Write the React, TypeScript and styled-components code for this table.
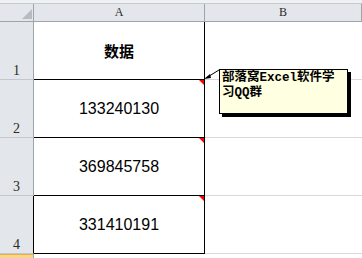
import React from "react";
import styled, { createGlobalStyle, css } from "styled-components";

const GlobalStyle = createGlobalStyle`
  html, body {
    margin: 0;
    padding: 0;
    background: #ffffff;
    overflow: hidden;
  }
`;

const HEAD_BG = "#e3e6ea";
const HEAD_LINE = "#9fa4aa";
const HEAD_SEP = "#c3c7cc";
const GRID = "#d9d9d9";

const Sheet = styled.div`
  position: relative;
  width: 362px;
  height: 258px;
  overflow: hidden;
  background: #fff;
  display: flex;
  flex-direction: column;
`;

const TopStrip = styled.div`
  height: 3px;
  background: #eff1f3;
  border-bottom: 1px solid #c7cbd0;
`;

const Grid = styled.div`
  flex: 1;
  display: grid;
  grid-template-columns: 34px 171px 1fr;
  grid-template-rows: 18px repeat(4, 58px) 1fr;
`;

const Corner = styled.div`
  box-sizing: border-box;
  background: ${HEAD_BG};
  border-right: 1px solid ${HEAD_LINE};
  border-bottom: 1px solid ${HEAD_LINE};
  display: flex;
  align-items: flex-end;
  justify-content: flex-end;
  padding: 0 1px 2px 0;
`;

const CornerMark = styled.div`
  width: 10px;
  height: 10px;
  background: #b7bcc2;
  clip-path: polygon(100% 0, 100% 100%, 0 100%);
`;

const ColHeader = styled.div`
  box-sizing: border-box;
  background: ${HEAD_BG};
  border-right: 1px solid ${HEAD_LINE};
  border-bottom: 1px solid ${HEAD_LINE};
  display: flex;
  align-items: center;
  justify-content: center;
  font-family: "Liberation Serif", serif;
  font-size: 12px;
  color: #2b2b2b;
`;

const RowHeader = styled.div<{ $edge?: boolean; $selected?: boolean }>`
  box-sizing: border-box;
  background: ${HEAD_BG};
  border-right: 1px solid ${(p) => (p.$edge ? "#000" : HEAD_LINE)};
  border-bottom: 1px solid ${HEAD_SEP};
  display: flex;
  align-items: flex-end;
  justify-content: center;
  padding-bottom: 1px;
  font-family: "Liberation Serif", serif;
  font-size: 14px;
  line-height: 14px;
  color: #2b2b2b;
  ${(p) =>
    p.$selected &&
    css`
      background: #f8d588;
      border-top: 1px solid #e9b14c;
      border-bottom: none;
    `}
`;

const DataCell = styled.div<{ $title?: boolean }>`
  position: relative;
  box-sizing: border-box;
  border-right: 1px solid #000;
  border-bottom: 1px solid #000;
  display: flex;
  align-items: center;
  justify-content: center;
  color: #000;
  ${(p) =>
    p.$title
      ? css`
          font-family: "Noto Sans CJK SC", sans-serif;
          font-weight: 700;
          font-size: 15px;
        `
      : css`
          font-family: "Liberation Sans", sans-serif;
          font-size: 16px;
        `}
`;

const CommentMark = styled.span`
  position: absolute;
  top: 0;
  right: 0;
  width: 5px;
  height: 5px;
  background: #ff0000;
  clip-path: polygon(0 0, 100% 0, 100% 100%);
`;

const EmptyCell = styled.div<{ $line?: boolean }>`
  box-sizing: border-box;
  border-bottom: ${(p) => (p.$line ? `1px solid ${GRID}` : "none")};
`;

const CommentBox = styled.div`
  position: absolute;
  left: 219px;
  top: 69px;
  width: 129px;
  height: 45px;
  box-sizing: border-box;
  background: #ffffe1;
  border: 1px solid #000;
  box-shadow: 3px 3px 0 #000;
  padding: 1px 2px;
  font-family: "Liberation Mono", "Noto Sans CJK SC", monospace;
  font-weight: 700;
  font-size: 12.5px;
  line-height: 15px;
  color: #000;
`;

const Arrow = styled.svg`
  position: absolute;
  left: 200px;
  top: 66px;
  overflow: visible;
`;

const rows = [
  { n: 1, text: "数据", title: true },
  { n: 2, text: "133240130", comment: true },
  { n: 3, text: "369845758", comment: true },
  { n: 4, text: "331410191", comment: true },
];

export default function App() {
  return (
    <>
      <GlobalStyle />
      <Sheet>
        <TopStrip />
        <Grid>
          <Corner>
            <CornerMark />
          </Corner>
          <ColHeader>A</ColHeader>
          <ColHeader>B</ColHeader>
          {rows.map((r) => (
            <React.Fragment key={r.n}>
              <RowHeader $edge={r.n === 4}>{r.n}</RowHeader>
              <DataCell $title={r.title}>
                {r.text}
                {r.comment && <CommentMark />}
              </DataCell>
              <EmptyCell $line />
            </React.Fragment>
          ))}
          <RowHeader $selected />
          <EmptyCell />
          <EmptyCell />
        </Grid>
        <CommentBox>
          部落窝Excel软件学
          <br />
          习QQ群
        </CommentBox>
        <Arrow width="22" height="18" viewBox="0 0 22 18">
          <line x1="19" y1="4" x2="6" y2="12" stroke="#000" strokeWidth="1" />
          <polygon points="4,13 10,8 11,12" fill="#000" />
        </Arrow>
      </Sheet>
    </>
  );
}
